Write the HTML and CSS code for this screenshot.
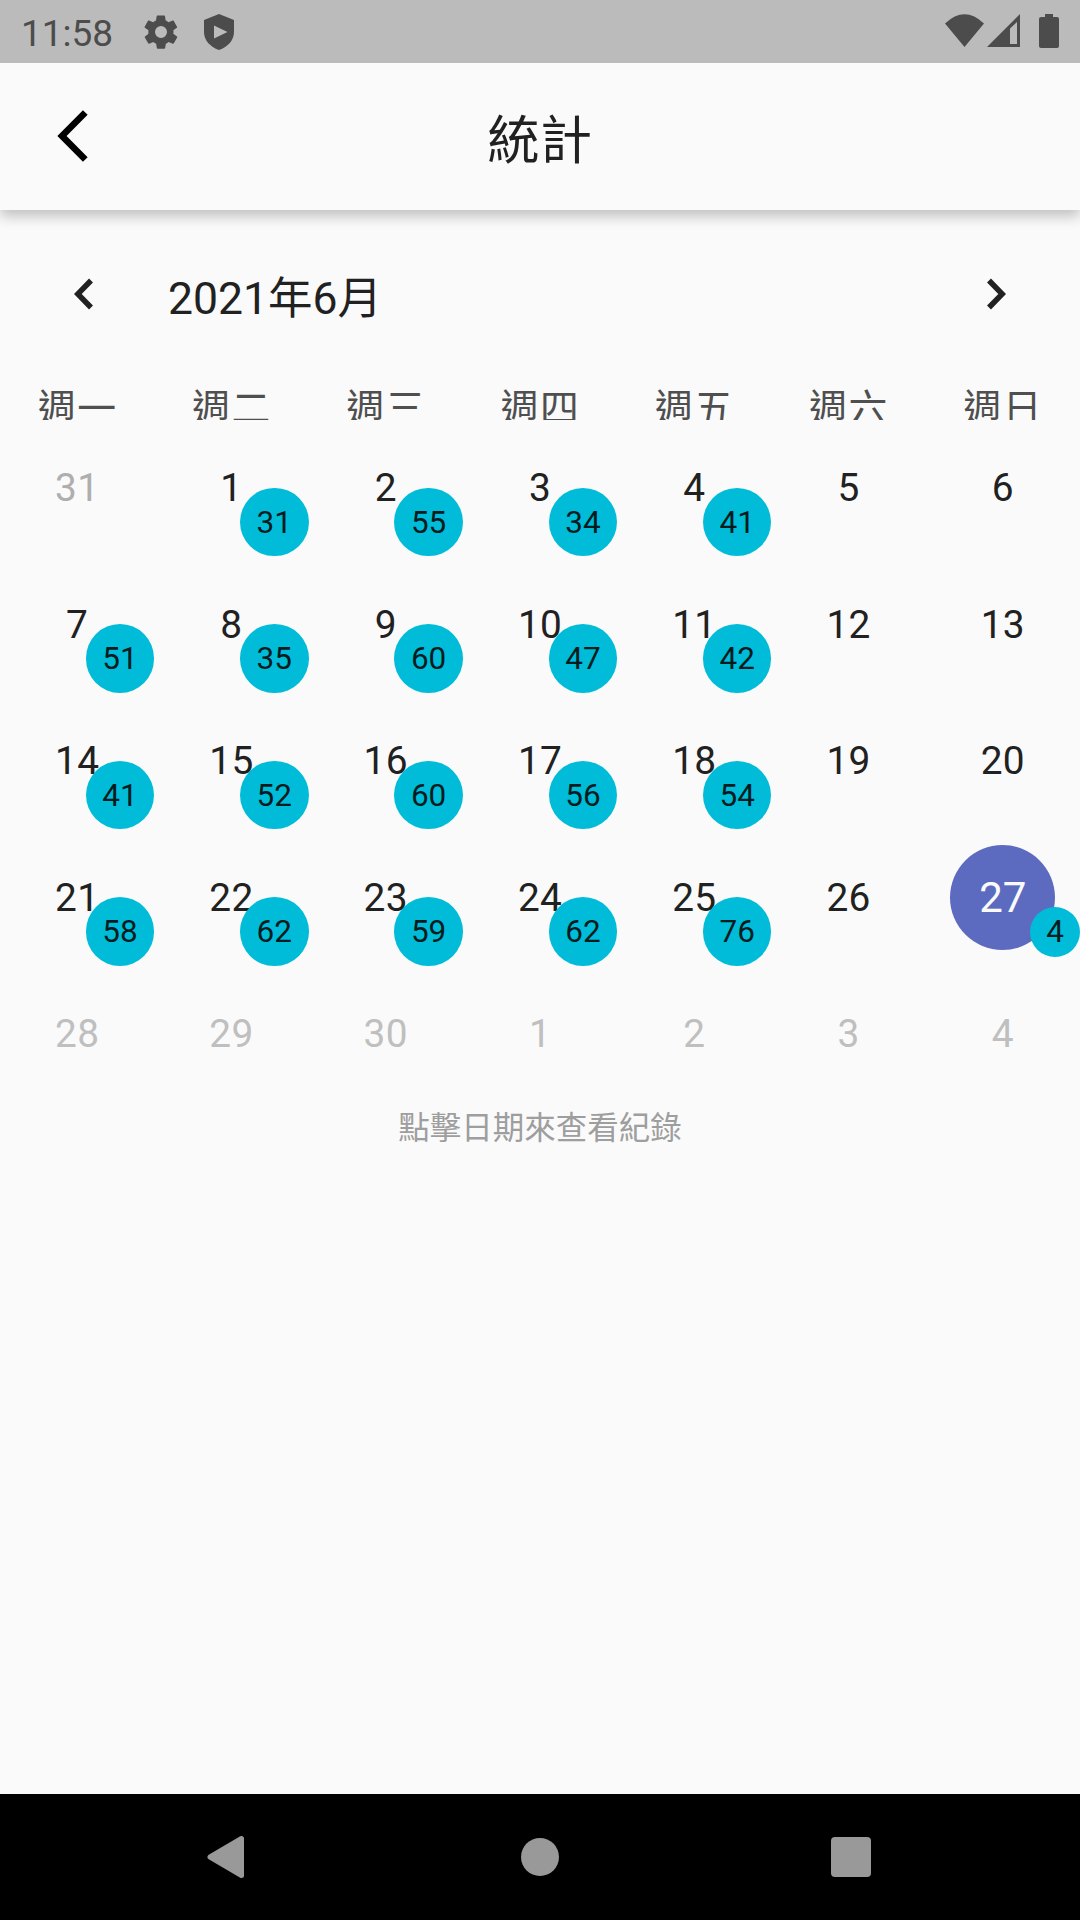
FILE: index.html
```html
<!DOCTYPE html>
<html lang="zh-Hant">
<head>
<meta charset="utf-8">
<title>統計</title>
<link rel="stylesheet" href="styles.css">
</head>
<body>
<div class="screen">
  <div class="status">
    <span class="clock">11:58</span>
    <svg class="gear" width="40" height="40" viewBox="0 0 24 24"><path d="M19.4 13c0-.3.1-.6.1-1s0-.7-.1-1l2.1-1.600c.2-.2.3-.4.1-.600l-2-3.500c-.1-.2-.4-.3-.6-.2l-2.500 1c-.5-.4-1.100-.7-1.700-1l-.4-2.600c0-.2-.2-.4-.5-.4h-4c-.2 0-.5.2-.5.4l-.4 2.600c-.6.300-1.200.6-1.700 1l-2.500-1c-.2-.1-.5 0-.6.200l-2 3.500c-.1.200-.1.5.100.600L4.500 11c0 .3-.1.6-.1 1s0 .7.1 1l-2.100 1.700c-.2.100-.2.400-.1.600l2 3.500c.1.200.4.300.6.200l2.500-1c.5.400 1.100.7 1.700 1l.4 2.600c0 .2.200.4.5.4h4c.2 0 .5-.2.5-.4l.4-2.600c.6-.3 1.200-.6 1.700-1l2.500 1c.2.100.5 0 .6-.2l2-3.500c.1-.2.1-.5-.1-.6zM12 15.600a3.600 3.600 0 1 1 0-7.200 3.600 3.600 0 0 1 0 7.200z"/></svg>
    <svg class="shield" width="30" height="36" viewBox="0 0 30 36"><path fill-rule="evenodd" d="M15 0 30 6v12c0 8-6 15-15 18C6 33 0 26 0 18V6zM10 11.500v13l13.500-6.500z"/></svg>
    <svg class="signals" width="115" height="36" viewBox="0 0 115 36"><path d="M0 9.500Q19.500-9 39 9.500L19.500 33zM42 33 75 0v33z"/><path class="cut" d="M65 14.500 72 8v22h-7z"/><path d="M100 0h8v3h4q2 0 2 2v27q0 2-2 2H96q-2 0-2-2V5q0-2 2-2h4z"/></svg>
  </div>
  <header class="appbar">
    <svg class="back" width="32" height="54" viewBox="0 0 32 54"><path d="M28.300 3.500 5 27 28.300 50.500"/></svg>
    <h1>統計</h1>
  </header>
  <main>
    <div class="month">
      <svg class="arrow" width="20" height="32" viewBox="0 0 20 32"><path d="M17 2.500 3.800 16 17 29.500"/></svg>
      <h2>2021年6月</h2>
      <svg class="arrow" width="20" height="32" viewBox="0 0 20 32"><path d="M3 2.500 16.200 16 3 29.500"/></svg>
    </div>
    <div class="week"><span>週一</span><span>週二</span><span>週三</span><span>週四</span><span>週五</span><span>週六</span><span>週日</span></div>
    <div class="days">
      <div class="day past">31</div>
      <div class="day">1<b>31</b></div>
      <div class="day">2<b>55</b></div>
      <div class="day">3<b>34</b></div>
      <div class="day">4<b>41</b></div>
      <div class="day">5</div>
      <div class="day">6</div>
      <div class="day">7<b>51</b></div>
      <div class="day">8<b>35</b></div>
      <div class="day">9<b>60</b></div>
      <div class="day">10<b>47</b></div>
      <div class="day">11<b>42</b></div>
      <div class="day">12</div>
      <div class="day">13</div>
      <div class="day">14<b>41</b></div>
      <div class="day">15<b>52</b></div>
      <div class="day">16<b>60</b></div>
      <div class="day">17<b>56</b></div>
      <div class="day">18<b>54</b></div>
      <div class="day">19</div>
      <div class="day">20</div>
      <div class="day">21<b>58</b></div>
      <div class="day">22<b>62</b></div>
      <div class="day">23<b>59</b></div>
      <div class="day">24<b>62</b></div>
      <div class="day">25<b>76</b></div>
      <div class="day">26</div>
      <div class="day"><span class="today">27</span><b class="small">4</b></div>
      <div class="day off">28</div>
      <div class="day off">29</div>
      <div class="day off">30</div>
      <div class="day off">1</div>
      <div class="day off">2</div>
      <div class="day off">3</div>
      <div class="day off">4</div>
    </div>
    <p class="hint">點擊日期來查看紀錄</p>
  </main>
  <nav class="navbar">
    <svg width="42" height="44" viewBox="0 0 42 44"><path d="M34.500 3.500v37L3 22z" stroke-width="5"/></svg>
    <svg width="40" height="40" viewBox="0 0 40 40"><circle cx="20" cy="20" r="19"/></svg>
    <svg width="40" height="40" viewBox="0 0 40 40"><rect width="40" height="40" rx="4"/></svg>
  </nav>
</div>
</body>
</html>
```
FILE: styles.css
```css
* { box-sizing: border-box; }
body { margin: 0; background: #fafafa; color: #212121; font-family: Roboto, "Noto Sans CJK TC", sans-serif; }
.screen { width: 1080px; height: 1920px; display: flex; flex-direction: column; overflow: hidden; }
.status { position: relative; z-index: 1; height: 63px; flex: none; display: flex; align-items: center; background: #bbb; color: #4c4c4c; padding: 0 20px 0 21px; }
.status svg { fill: #4c4c4c; }
.clock { font-size: 37px; line-height: 63px; width: 91px; padding-top: 3px; white-space: nowrap; }
.status .gear { margin-left: 29px; }
.status .shield { margin-left: 23px; }
.status .signals { margin-left: auto; margin-top: 0; }
.status .cut { fill: #bbb; }
.appbar { height: 147px; flex: none; display: flex; align-items: center; padding-left: 57px; box-shadow: 0 6px 13px rgba(0, 0, 0, .24); }
.back { fill: none; stroke: #000; stroke-width: 6.600; margin-top: -1px; }
h1 { flex: 1; margin: 0 89px 0 0; padding-top: 11px; text-align: center; font-size: 52px; font-weight: 400; letter-spacing: .4px; line-height: 70px; }
main { flex: 1; }
.month { display: flex; align-items: center; padding: 55px 74px 0; height: 113px; }
.month h2 { flex: 1; margin: 10px 0 0 74px; font-size: 44.500px; font-weight: 400; line-height: 58px; }
.arrow { fill: none; stroke: #212121; stroke-width: 5.500; }
.week { display: grid; grid-template-columns: repeat(7, 1fr); height: 37px; margin-top: 60px; overflow: hidden; text-align: center; font-size: 38.800px; letter-spacing: .7px; line-height: 51px; color: #4f4f4f; }
.days { display: grid; grid-template-columns: repeat(7, 1fr); grid-auto-rows: 136.500px; margin-top: -.5px; }
.day { position: relative; display: flex; align-items: center; justify-content: center; font-size: 38.800px; letter-spacing: .3px; }
.past { color: #aeaeae; }
.off { color: #bfbfbf; }
.day b { position: absolute; right: 0; top: 68.300px; width: 68.500px; height: 68.500px; border-radius: 50%; background: #00bcd8; color: #001c20; font-size: 31.500px; font-weight: 400; letter-spacing: 0; line-height: 69px; text-align: center; }
.day b.small { width: 50px; height: 50px; top: 77.500px; line-height: 50px; }
.today { width: 105px; height: 105px; border-radius: 50%; background: #5c6bc0; color: #fafafa; font-size: 42px; letter-spacing: 0; line-height: 105px; text-align: center; }
.hint { margin: 0; padding-top: 5px; font-size: 31.500px; line-height: 44px; text-align: center; color: #9e9e9e; }
.navbar { height: 126px; flex: none; background: #000; display: flex; align-items: center; justify-content: space-between; padding: 0 209px 0 207px; }
.navbar svg { fill: #999; stroke: #999; stroke-width: 0; stroke-linejoin: round; }
```
